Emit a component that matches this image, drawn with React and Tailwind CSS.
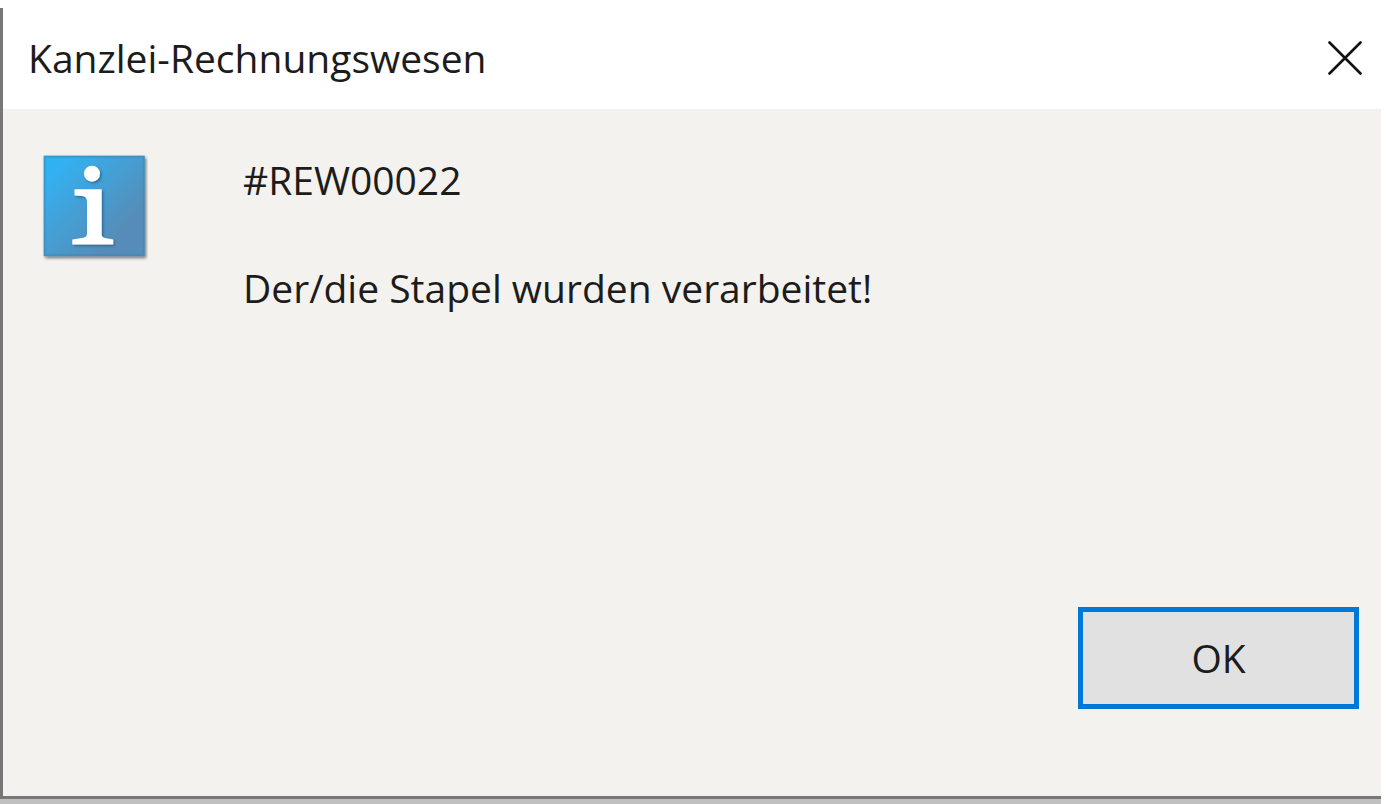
import React from 'react';

function CloseIcon() {
  return (
    <svg viewBox="0 0 34 34" className="w-[34px] h-[34px]" fill="none" stroke="#111111" strokeWidth="2.6" strokeLinecap="round" aria-hidden="true">
      <path d="M1.5 1.5 32.5 32.5M32.5 1.5 1.5 32.5" />
    </svg>
  );
}

function InfoIcon() {
  return (
    <svg viewBox="0 0 108 108" className="w-[108px] h-[108px] shrink-0" role="img" aria-label="Information">
      <defs>
        <linearGradient id="tile" x1="0" y1="0" x2="1" y2="1">
          <stop offset="0.12" stopColor="#33b1f2" />
          <stop offset="0.75" stopColor="#558db8" />
        </linearGradient>
        <filter id="tileShadow" x="-10%" y="-10%" width="125%" height="125%">
          <feDropShadow dx="1.5" dy="2" stdDeviation="1.5" floodColor="#000000" floodOpacity="0.5" />
        </filter>
        <filter id="glyphShadow" x="-20%" y="-20%" width="150%" height="150%">
          <feDropShadow dx="1.5" dy="1.5" stdDeviation="1.2" floodColor="#1f4a6b" floodOpacity="0.6" />
        </filter>
      </defs>
      <rect x="3.7" y="2.7" width="101" height="100.500" fill="url(#tile)" filter="url(#tileShadow)" />
      <rect x="4.7" y="3.7" width="99" height="98.500" fill="none" stroke="#3f83b0" strokeWidth="2" strokeOpacity="0.5" />
      <g fill="#ffffff" filter="url(#glyphShadow)">
        <circle cx="52" cy="20.7" r="8" />
        <path d="M34.500 36.300H61.700V81.500Q61.700 84.500 65 85L73.300 86.500V91.500H32.300V86.500L42 85Q47 84.500 47 81V49Q47 43.500 42 43L34.500 42.500Z" />
      </g>
    </svg>
  );
}

export default function App() {
  return (
    <div className="min-h-screen flex flex-col bg-white pt-2 font-['Open_Sans','Noto_Sans',sans-serif] text-[39px] leading-[54px] text-[#1c1c1c]">
      <div
        role="dialog"
        aria-labelledby="dialog-title"
        aria-describedby="dialog-message"
        className="flex-1 flex flex-col mr-[5px] border-l-[3px] border-b-[3px] border-[#777777] bg-[#f3f2ee]"
      >
        {/* Title bar */}
        <header className="flex items-center justify-between bg-white h-[101px] pl-[25px] pr-[19px] pb-[2px]">
          <h1 id="dialog-title">Kanzlei-Rechnungswesen</h1>
          <button type="button" aria-label="Schließen">
            <CloseIcon />
          </button>
        </header>

        {/* Message */}
        <main className="flex-1 flex items-start gap-[95px] pl-[37px] pt-11">
          <InfoIcon />
          <div id="dialog-message">
            <p>#REW00022</p>
            <p className="mt-[54px]">Der/die Stapel wurden verarbeitet!</p>
          </div>
        </main>

        {/* Actions */}
        <footer className="flex justify-end pr-[22px] pb-[87px]">
          <button type="button" className="w-[281px] h-[102px] border-[5px] border-[#0078d7] bg-[#e1e1e1]">
            OK
          </button>
        </footer>
      </div>
      <div className="h-[5px] mr-[5px] bg-[#c0c0c0]" />
    </div>
  );
}
